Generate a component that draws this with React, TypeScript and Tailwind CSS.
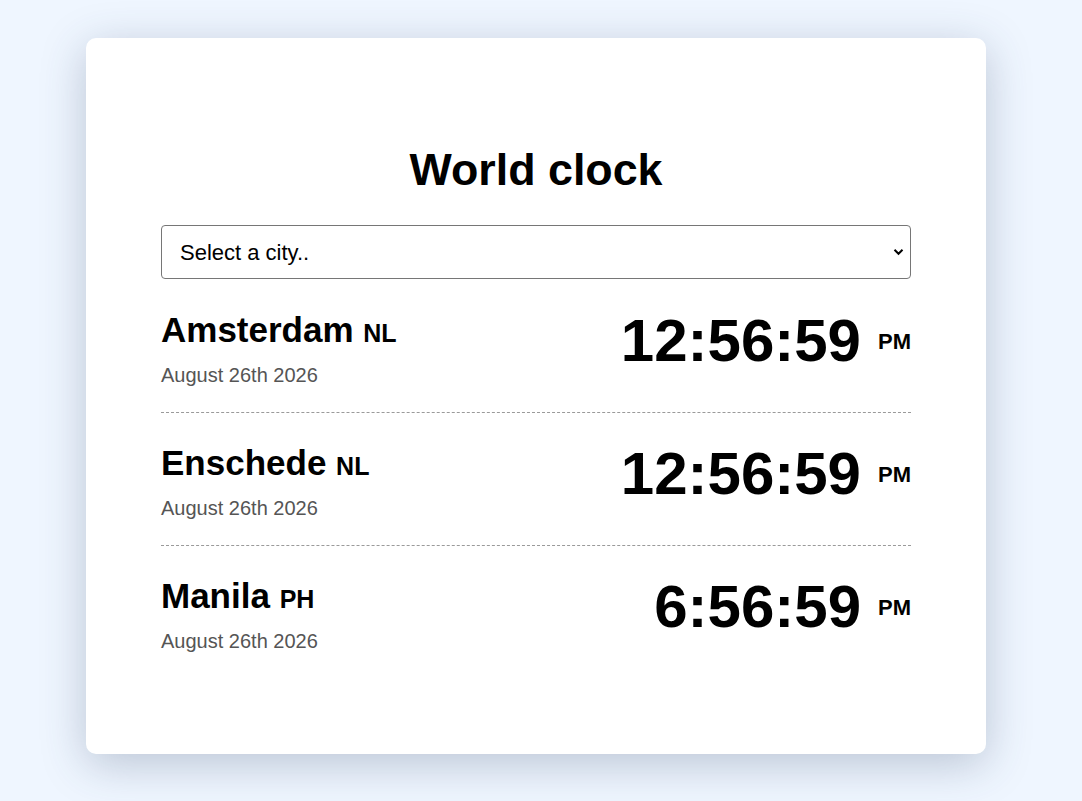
const CITIES = [
  { name: 'Amsterdam', country: 'NL', date: 'August 26th 2026', time: '12:56:59', ampm: 'PM' },
  { name: 'Enschede', country: 'NL', date: 'August 26th 2026', time: '12:56:59', ampm: 'PM' },
  { name: 'Manila', country: 'PH', date: 'August 26th 2026', time: '6:56:59', ampm: 'PM' },
]

function CityRow({ city, first, last }: { city: typeof CITIES[number], first: boolean, last: boolean }) {
  return (
    <div className={'flex justify-between items-start pb-[25px] ' + (first ? 'pt-[27px] ' : 'pt-[26px] ') + (last ? '' : 'border-b border-dashed border-[#9a9a9a]')}>
      <div>
        <div className="mt-[4px] text-[35px] leading-[40px] font-bold text-black">
          {city.name} <span className="text-[25px] leading-none">{city.country}</span>
        </div>
        <div className="mt-[13px] text-[20px] leading-[24px] text-[#555]">{city.date}</div>
      </div>
      <div className="flex items-start">
        <div className="mr-[2px] text-[60px] leading-[69px] font-bold text-black">{city.time}</div>
        <div className="ml-[15px] mt-[23px] text-[22px] leading-[26px] font-bold text-black">{city.ampm}</div>
      </div>
    </div>
  )
}

export default function App() {
  return (
    <div className="min-h-[801px] bg-[#eff6ff] pt-[38px] pb-[47px] flex justify-center pr-[10px]" style={{ fontFamily: '"Liberation Sans", Arial, sans-serif' }}>
      <div className="w-[900px] bg-white rounded-[10px] px-[75px] pt-[75px] pb-[74px] shadow-[0_10px_45px_rgba(50,70,100,0.28)]">
        <h1 className="my-[30px] text-center text-[44.8px] leading-[52px] font-bold text-black">World clock</h1>
        <div className="relative">
          <select className="w-full h-[54px] appearance-none rounded-[4px] border border-[#767676] bg-white pl-[18px] text-[22px] text-black outline-none">
            <option>Select a city..</option>
          </select>
          <svg className="absolute right-[7px] top-[23px] pointer-events-none" width="11" height="8" viewBox="0 0 11 8">
            <path d="M1.5 1.8 L5.5 5.8 L9.5 1.8" fill="none" stroke="#000" strokeWidth="2" />
          </svg>
        </div>
        <div>
          {CITIES.map((c, i) => (
            <CityRow key={c.name} city={c} first={i === 0} last={i === CITIES.length - 1} />
          ))}
        </div>
      </div>
    </div>
  )
}
